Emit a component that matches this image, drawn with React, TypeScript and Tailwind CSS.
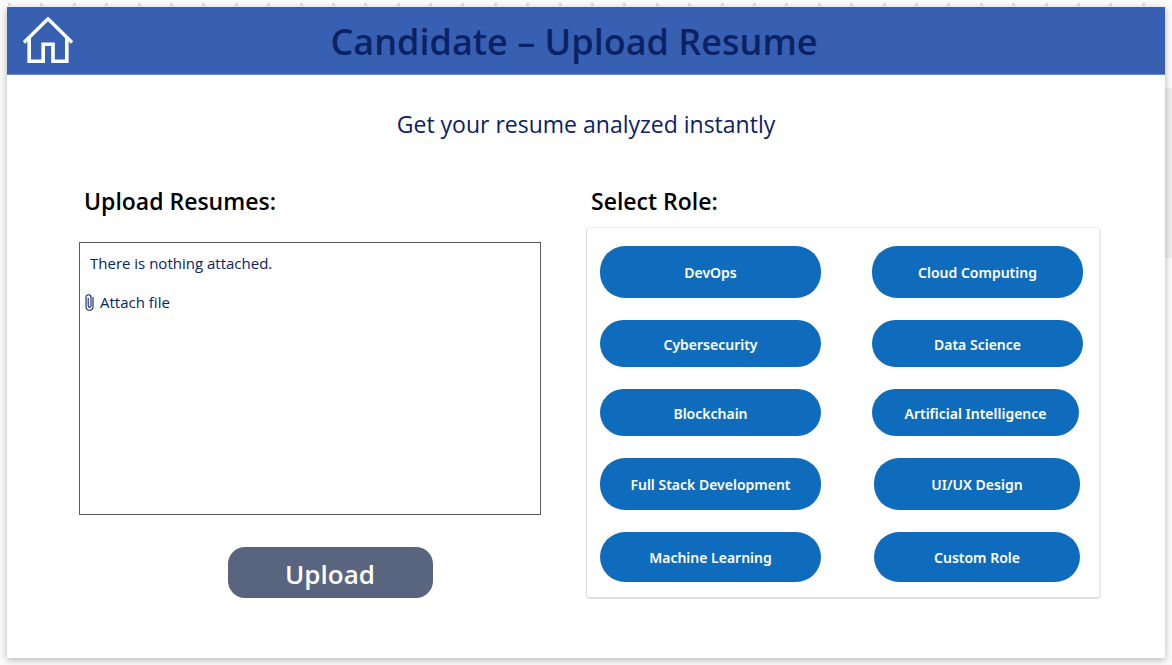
import { useState } from "react";

type Role = { name: string; size: string };

const roles: Role[] = [
  { name: "DevOps", size: "h-[52px]" },
  { name: "Cloud Computing", size: "h-[52px]" },
  { name: "Cybersecurity", size: "h-[47px]" },
  { name: "Data Science", size: "h-[47px]" },
  { name: "Blockchain", size: "h-[47px]" },
  { name: "Artificial Intelligence", size: "h-[47px] mr-1" },
  { name: "Full Stack Development", size: "h-[52px]" },
  { name: "UI/UX Design", size: "h-[52px] ml-0.5 mr-[3px]" },
  { name: "Machine Learning", size: "h-[50px]" },
  { name: "Custom Role", size: "h-[50px] ml-0.5 mr-[3px]" },
];

const rulerMarks = Array.from({ length: 36 }, (_, i) => i);

function HomeIcon() {
  return (
    <svg viewBox="0 0 50 48" className="h-12 w-[50px]" fill="none" stroke="#fff" aria-hidden="true">
      <path d="M1 25.5 25 1.8 49 25.5" strokeWidth="3.4" />
      <path d="M6.2 21V44.2H20.2V27.2H30V44.2H43.8V21" strokeWidth="3.6" />
    </svg>
  );
}

function ClipIcon() {
  return (
    <svg viewBox="0 0 9 17" className="h-[17px] w-[9px]" fill="none" stroke="#0b2265" aria-hidden="true">
      <path
        d="M8 3V12.8C8 15 6.5 16.2 4.5 16.2S1 15 1 12.8V3.2C1 1.6 2 .7 3.5.7S6 1.6 6 3.2V11.8C6 12.8 5.4 13.4 4.6 13.4S3.2 12.8 3.2 11.8V4"
        strokeWidth="1.1"
      />
    </svg>
  );
}

export default function App() {
  const [selected, setSelected] = useState<string | null>(null);

  return (
    <div className="flex min-h-screen flex-col bg-[#fafafa] font-['Open_Sans','Noto_Sans',sans-serif]">
      <div className="flex h-[7px] items-end justify-between pr-[27px] pb-px pl-2">
        {rulerMarks.map((mark) => (
          <span key={mark} className="size-[3px] bg-[#dedede]" />
        ))}
      </div>
      <div className="mb-[7px] flex grow">
        <div className="w-[7px] shrink-0" />
        <main className="relative grow bg-white shadow-[0_2px_7px_rgba(0,0,0,0.28)]">
          <header className="flex h-[68px] items-center border-b border-[#6c8cc8] bg-[#3760b2] pr-[90px] pl-4">
            <button type="button" aria-label="Home" className="shrink-0">
              <HomeIcon />
            </button>
            <h1 className="grow pt-0.5 text-center text-4xl font-semibold text-[#0b2265]">Candidate – Upload Resume</h1>
          </header>

          <p className="mt-[31px] text-center text-[23px] leading-9 text-[#0b2265]">Get your resume analyzed instantly</p>

          <div className="mt-[41px] grid grid-cols-[462fr_515fr] gap-x-[45px] pr-16 pl-[72px]">
            <section>
              <h2 className="pl-[5px] text-[23px] leading-9 font-semibold text-black">Upload Resumes:</h2>
              <div className="mt-[23px] h-[273px] border border-[#5c5c5c] pt-[10px] text-[15px] leading-5 text-[#0b2265]">
                <p className="pl-2.5">There is nothing attached.</p>
                <button type="button" className="mt-[19px] ml-[5px] flex items-center gap-1.5">
                  <ClipIcon />
                  Attach file
                </button>
              </div>
              <div className="mt-8 flex justify-center pl-10">
                <button
                  type="button"
                  className="h-[51px] w-[205px] rounded-[17px] bg-[#59647f] pt-1 text-[26px] font-semibold text-white"
                >
                  Upload
                </button>
              </div>
            </section>

            <section>
              <h2 className="pl-[5px] text-[23px] leading-9 font-semibold text-black">Select Role:</h2>
              <div className="mt-2 grid grid-cols-[221fr_211fr] gap-x-[51px] gap-y-[22px] rounded border-t border-r-2 border-b-2 border-l border-t-[#f2f2f2] border-r-[#ececec] border-b-[#dedede] border-l-[#dedede] pt-[18px] pr-4 pb-[15px] pl-[13px]">
                {roles.map((role) => (
                  <button
                    key={role.name}
                    type="button"
                    aria-pressed={selected === role.name}
                    onClick={() => setSelected(role.name)}
                    className={`${role.size} rounded-[25px] bg-[#0f6cbd] pt-0.5 font-['Noto_Sans',sans-serif] text-sm font-semibold text-white`}
                  >
                    {role.name}
                  </button>
                ))}
              </div>
            </section>
          </div>
        </main>
        <div className="mt-[81px] h-[170px] w-[7px] shrink-0 bg-[#eeeeee]" />
      </div>
    </div>
  );
}
